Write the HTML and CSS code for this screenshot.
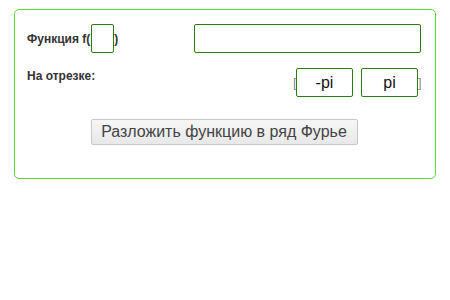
FILE: index.html
```html
<!DOCTYPE html>
<html lang="ru">
<head>
    <meta charset="UTF-8">
    <title>Ряд Фурье</title>
    <link rel="stylesheet" href="styles.css">
</head>
<body>
    <div class="panel">
        <div class="row">
            <div class="label">
                Функция f(<input class="field arg" type="text">)
            </div>
            <input class="field func" type="text">
        </div>
        <div class="row row-range">
            <div class="label label-top">На отрезке:</div>
            <div class="range">
                <span class="bracket">[</span>
                <input class="field bound" type="text" value="-pi">
                <input class="field bound" type="text" value="pi">
                <span class="bracket">]</span>
            </div>
        </div>
        <div class="actions">
            <button class="submit-btn">Разложить функцию в ряд Фурье</button>
        </div>
    </div>
</body>
</html>
```

FILE: styles.css
```css
body {
    margin: 0;
    padding: 9px 14px;
    background: #fff;
    font-family: "Liberation Sans", Arial, sans-serif;
}

.panel {
    width: 394px;
    border: 1px solid #5ed83c;
    border-radius: 5px;
    padding: 13px 14px 33px 12px;
}

.row {
    display: flex;
    justify-content: space-between;
    align-items: center;
}

.row-range {
    margin-top: 15px;
    align-items: flex-start;
}

.label {
    display: flex;
    align-items: center;
    padding-top: 1px;
    font-size: 12px;
    font-weight: bold;
    color: #333;
}

.label-top {
    padding-top: 1px;
}

.field {
    box-sizing: border-box;
    height: 29px;
    border: 1px solid #2a7d0c;
    border-radius: 2px;
    background: #fff;
    font-family: "Liberation Sans", Arial, sans-serif;
    font-size: 16px;
    color: #111;
    text-align: center;
    padding: 0;
    margin: 0;
}

.arg {
    width: 23px;
    margin-left: 1px;
}

.func {
    width: 227px;
}

.range {
    display: flex;
    align-items: center;
    font-size: 13px;
    color: #888;
}

.bound {
    width: 57px;
}

.bound + .bound {
    margin-left: 8px;
}

.bracket {
    width: 3px;
    overflow: hidden;
}

.actions {
    margin-top: 22px;
    text-align: center;
}

.submit-btn {
    height: 26px;
    width: 267px;
    padding: 0;
    font-family: "Liberation Sans", Arial, sans-serif;
    font-size: 16px;
    color: #444;
    background: linear-gradient(#f6f6f6, #e8e8e8);
    border: 1px solid #c8c8c8;
    border-radius: 2px;
}
```
